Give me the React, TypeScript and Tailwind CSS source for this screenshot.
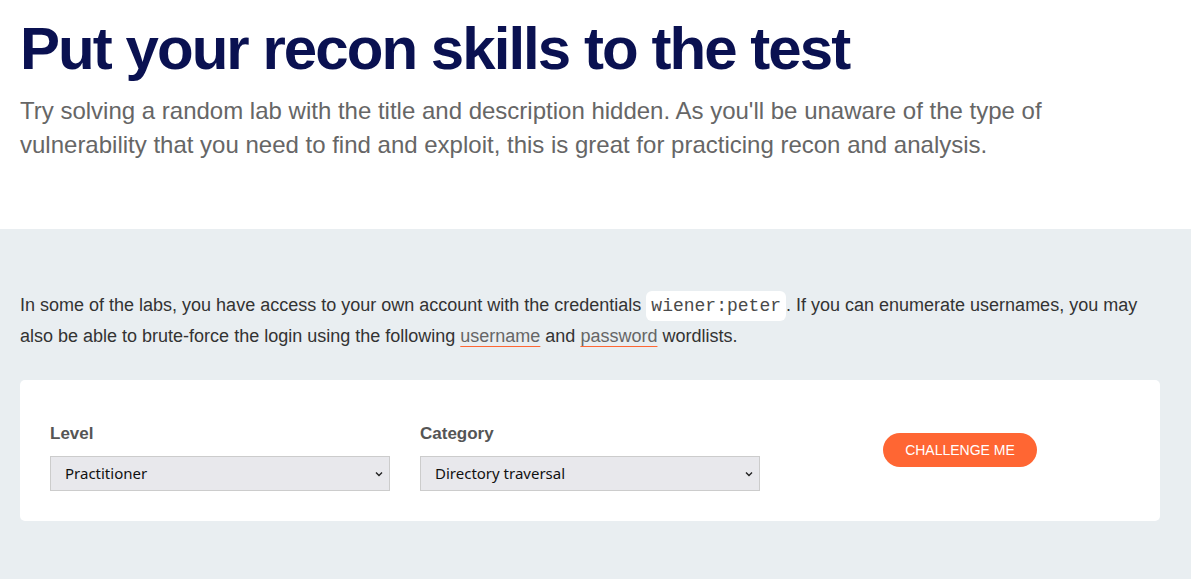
import React from "react";

export default function App() {
  return (
    <div className="w-[1191px] h-[579px] overflow-hidden bg-white" style={{ fontFamily: '"Liberation Sans", Arial, sans-serif' }}>
      <section className="px-5 pt-[13px] h-[229px]">
        <h1 className="text-[60px] leading-[72px] font-bold text-[#0a1151] tracking-[-1.95px]">Put your recon skills to the test</h1>
        <p className="mt-[9px] text-[24px] leading-[34px] text-[#666666]">
          Try solving a random lab with the title and description hidden. As you'll be unaware of the type of vulnerability that you need to find and exploit, this is great for practicing recon and analysis.
        </p>
      </section>
      <section className="bg-[#e9eef1] h-[350px] px-5 pt-[61px]">
        <p className="text-[18px] leading-[30px] text-[#333333] pr-[20px]">
          In some of the labs, you have access to your own account with the credentials{" "}
          <code className="bg-white rounded-[6px] px-[5px] py-[5px] text-[18px] text-[#4a4a4a]" style={{ fontFamily: '"Liberation Mono", "Courier New", monospace' }}>wiener:peter</code>
          . If you can enumerate usernames, you may also be able to brute-force the login using the following{" "}
          <a className="text-[#666666] underline decoration-[#ff6633] underline-offset-[4px]">username</a> and{" "}
          <a className="text-[#666666] underline decoration-[#ff6633] underline-offset-[4px]">password</a> wordlists.
        </p>
        <div className="mt-[29px] w-[1140px] h-[141px] bg-white rounded-[5px] px-[30px] pt-[44px] flex">
          <div className="w-[340px] mr-[30px]">
            <label className="block text-[17px] leading-[20px] font-bold text-[#555555]">Level</label>
            <div className="mt-[12px] h-[35px] bg-[#e8e8ec] border border-[#cccccc] flex items-center justify-between pl-[14px] pr-[5px]" style={{ fontFamily: '"Noto Sans", "DejaVu Sans", sans-serif' }}>
              <span className="text-[15px] text-[#111111]">Practitioner</span>
              <svg width="10" height="10" viewBox="0 0 10 10"><path d="M2 3.5 L5 6.5 L8 3.5" fill="none" stroke="#222" strokeWidth="1.4" /></svg>
            </div>
          </div>
          <div className="w-[340px]">
            <label className="block text-[17px] leading-[20px] font-bold text-[#555555]">Category</label>
            <div className="mt-[12px] h-[35px] bg-[#e8e8ec] border border-[#cccccc] flex items-center justify-between pl-[14px] pr-[5px]" style={{ fontFamily: '"Noto Sans", "DejaVu Sans", sans-serif' }}>
              <span className="text-[15px] text-[#111111]">Directory traversal</span>
              <svg width="10" height="10" viewBox="0 0 10 10"><path d="M2 3.5 L5 6.5 L8 3.5" fill="none" stroke="#222" strokeWidth="1.4" /></svg>
            </div>
          </div>
          <div className="flex-1 flex justify-center pt-[9px]">
            <button className="h-[34px] w-[154px] rounded-full bg-[#ff6633] text-white text-[14px] ml-[30px]">CHALLENGE ME</button>
          </div>
        </div>
      </section>
    </div>
  );
}
